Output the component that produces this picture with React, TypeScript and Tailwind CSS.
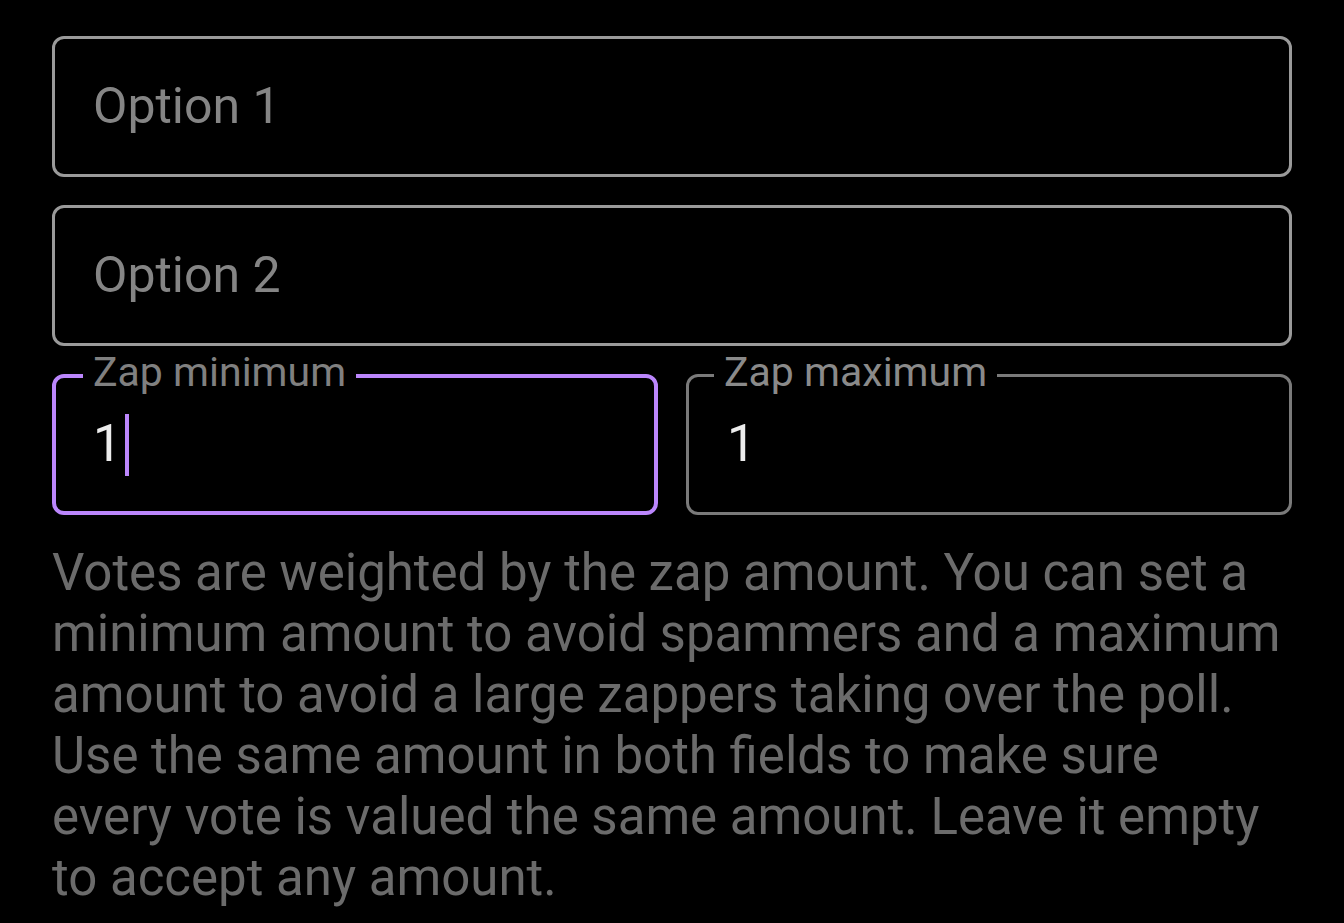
import React from 'react';

function OptionField({ placeholder }: { placeholder: string }) {
  return (
    <div className="h-[141px] rounded-[12px] border-[3px] border-[#9a9a9a] flex items-center pl-[38px]">
      <span className="text-[50px] text-[#858585]">{placeholder}</span>
    </div>
  );
}

function ZapField({ label, value, focused }: { label: string; value: string; focused?: boolean }) {
  return (
    <div
      className={
        focused
          ? 'relative h-[141px] rounded-[12px] border-[4px] border-[#bb86fc] flex items-center pl-[37px]'
          : 'relative h-[141px] rounded-[12px] border-[3px] border-[#7a7a7a] flex items-center pl-[38px]'
      }
    >
      {/* notch label sitting on the top border */}
      <span
        className={
          focused
            ? 'absolute top-[-26px] left-[27px] bg-black px-[10px] text-[41px] leading-[41px] text-[#808080]'
            : 'absolute top-[-25px] left-[25px] bg-black px-[10px] text-[41px] leading-[41px] text-[#8a8a8a]'
        }
      >
        {label}
      </span>
      <span className="text-[51px] text-[#ececec]">{value}</span>
      {focused && <span className="ml-[3px] w-[4px] h-[62px] bg-[#bb86fc]" />}
    </div>
  );
}

export default function App() {
  return (
    <div className="min-h-screen bg-black px-[52px] pt-[36px] font-['Roboto',sans-serif]">
      <div className="flex flex-col gap-[28px]">
        <OptionField placeholder="Option 1" />
        <OptionField placeholder="Option 2" />
        <div className="grid grid-cols-2 gap-[28px]">
          <ZapField label="Zap minimum" value="1" focused />
          <ZapField label="Zap maximum" value="1" />
        </div>
      </div>
      <p className="mt-[27px] text-[51px] leading-[61px] text-[#6b6b6b] whitespace-nowrap">
        Votes are weighted by the zap amount. You can set a<br />
        minimum amount to avoid spammers and a maximum<br />
        amount to avoid a large zappers taking over the poll.<br />
        Use the same amount in both fields to make sure<br />
        every vote is valued the same amount. Leave it empty<br />
        to accept any amount.
      </p>
    </div>
  );
}
